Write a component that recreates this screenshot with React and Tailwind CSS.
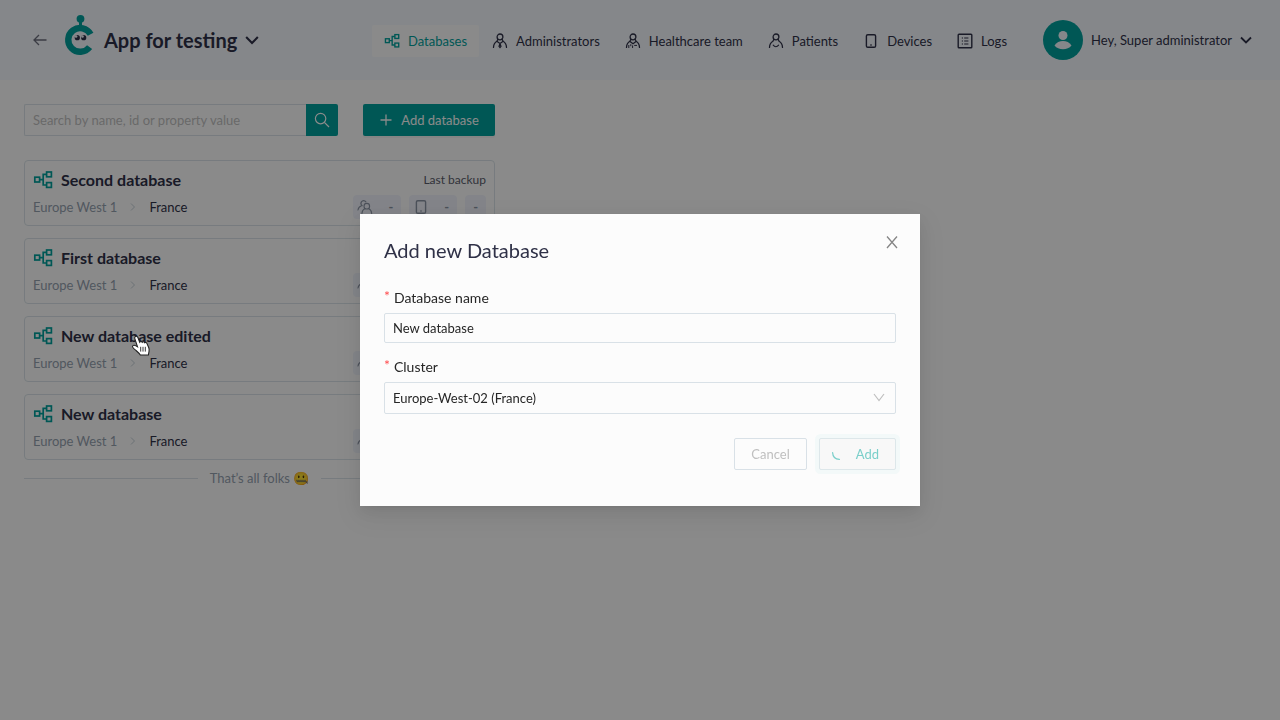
import React from "react";

function DatabaseIcon({ className }) {
  return (
    <svg viewBox="-1 -1 20 20" className={className} fill="none" stroke="currentColor" strokeWidth="1.7" aria-hidden="true">
      <rect x="0.8" y="6.2" width="4.8" height="4.8" />
      <rect x="12.6" y="1" width="4.8" height="4.8" />
      <rect x="12.6" y="11.6" width="4.8" height="4.8" />
      <path d="M5.6 8.6h3.6M12.6 3.4h-3.4v10.6h3.4" />
    </svg>
  );
}

function PersonIcon({ children }) {
  return (
    <svg viewBox="0 0 16 16" className="size-4" fill="none" stroke="currentColor" strokeWidth="1.3" strokeLinecap="round" aria-hidden="true">
      <circle cx="8" cy="3.9" r="2.9" />
      <path d="M5.9 6.3 4.9 8.3C3 9.4 1.6 11.6 1.5 14.4M10.1 6.3l1 2c1.9 1.1 3.3 3.3 3.4 6.1" />
      {children}
    </svg>
  );
}

function AdminIcon() {
  return (
    <PersonIcon>
      <path d="M5.2 8.6 8 10.6l2.8-2M8 10.4l-1 3L8 14.6l1-1.2-1-3" strokeWidth="1.2" />
    </PersonIcon>
  );
}

function CareIcon() {
  return (
    <PersonIcon>
      <path d="M5 8.6l3 2.2 3-2.2" />
      <path d="M3.8 12.4v2.2M5.8 11.6v1.2M7.6 12.8v1.8M9.6 12.4h2" strokeWidth="1" />
    </PersonIcon>
  );
}

function PatientIcon() {
  return (
    <PersonIcon>
      <path d="M5.2 12.2c.8 1 1.6 1.5 2.6 1.5s2-.5 2.8-1.5" strokeWidth="1.1" />
    </PersonIcon>
  );
}

function DeviceIcon({ className }) {
  return (
    <svg viewBox="0 0 16 16" className={className} fill="none" stroke="currentColor" strokeWidth="1.4" aria-hidden="true">
      <rect x="3.4" y="1.7" width="9.2" height="12.6" rx="1.4" />
      <path d="M7 12h2" strokeWidth="1" />
    </svg>
  );
}

function LogsIcon() {
  return (
    <svg viewBox="0 0 16 16" className="size-4" fill="none" stroke="currentColor" strokeWidth="1.4" aria-hidden="true">
      <rect x="1.2" y="1.2" width="13.6" height="13.6" rx="0.8" />
      <path d="M4.8 5h1.2M4.8 8h1.2M4.8 11h1.2M7.2 5h4.2M7.2 8h4.2M7.2 11h4.2" strokeWidth="1.1" />
    </svg>
  );
}

function UsersIcon() {
  return (
    <svg viewBox="0 0 16 16" className="size-4" fill="none" stroke="currentColor" strokeWidth="1.1" strokeLinecap="round" aria-hidden="true">
      <circle cx="9.8" cy="7.2" r="2.8" />
      <path d="M8 9.6c-1.8.9-3 2.8-3.1 5.2M11.6 9.6c1.8.9 3 2.8 3.1 5.2M5.2 6.6C4 5.800 3.600 4.200 4.400 2.900 5.500 1.200 7.800 1.200 8.900 2.900M4.400 6.800C2.600 7.500 1.300 9 1 11" />
    </svg>
  );
}

function ChevronDown({ className }) {
  return (
    <svg viewBox="0 0 12 12" className={className} fill="none" stroke="currentColor" strokeWidth="1.8" aria-hidden="true">
      <path d="M1 3.5l5 5 5-5" />
    </svg>
  );
}

function Logo() {
  return (
    <svg viewBox="0 0 32 44" className="h-11 w-8" aria-hidden="true">
      <circle cx="16.5" cy="4.8" r="3.9" fill="#009f9b" />
      <path d="M16.5 7v7" stroke="#009f9b" strokeWidth="3" />
      <path d="M26.6 20.2A11.9 11.9 0 1 0 25.6 33.1" fill="none" stroke="#009f9b" strokeWidth="6.4" />
      <circle cx="13.3" cy="23.7" r="2.6" fill="#2f3147" />
      <circle cx="19.7" cy="23.7" r="2.6" fill="#2f3147" />
      <circle cx="12.1" cy="22.5" r="1.3" fill="#f3f6fc" />
      <circle cx="18.5" cy="22.5" r="1.3" fill="#f3f6fc" />
    </svg>
  );
}

const navItems = [
  { label: "Databases", icon: <DatabaseIcon className="size-4" />, active: true },
  { label: "Administrators", icon: <AdminIcon /> },
  { label: "Healthcare team", icon: <CareIcon /> },
  { label: "Patients", icon: <PatientIcon /> },
  { label: "Devices", icon: <DeviceIcon className="size-4" /> },
  { label: "Logs", icon: <LogsIcon /> },
];

const databases = ["Second database", "First database", "New database edited", "New database"];

function Header() {
  return (
    <header className="flex h-20 items-center bg-[#f3f6fc] pr-7 pl-8 text-[#2f3147]">
      <button type="button" aria-label="Back" className="mr-4">
        <svg viewBox="0 0 16 16" className="size-4" fill="none" stroke="#6c6e7c" strokeWidth="1.3" aria-hidden="true">
          <path d="M14.5 8H2M7 3 2 8l5 5" />
        </svg>
      </button>
      <span className="mb-2">
        <Logo />
      </span>
      <button type="button" className="ml-2 flex items-center gap-2 text-xl font-bold whitespace-nowrap">
        App for testing
        <ChevronDown className="size-3.5" />
      </button>
      <nav className="ml-auto flex gap-px pt-0.5">
        {navItems.map((item) => (
          <a
            key={item.label}
            href="#"
            className={
              item.active
                ? "flex h-8 items-center gap-2 rounded-xs bg-[#fcfcfc] px-3 text-[13px] whitespace-nowrap text-[#009f9b]"
                : "flex h-8 items-center gap-2 rounded-xs px-3 text-[13px] whitespace-nowrap"
            }
          >
            {item.icon}
            {item.label}
          </a>
        ))}
      </nav>
      <button type="button" className="ml-6 flex items-center gap-2 text-[13px] whitespace-nowrap">
        <span className="flex size-10 items-center justify-center rounded-full bg-[#009f9b] text-[#f3f6fc]">
          <svg viewBox="0 0 20 20" className="size-5" fill="currentColor" aria-hidden="true">
            <circle cx="10" cy="5.5" r="4.5" />
            <path d="M1.5 15.5C3.5 12.4 6.5 11 10 11s6.500 1.400 8.500 4.500C16.500 18 13.500 19.300 10 19.300S3.500 18 1.500 15.500Z" />
          </svg>
        </span>
        Hey, Super administrator
        <ChevronDown className="size-3" />
      </button>
    </header>
  );
}

function Stat({ icon }) {
  return (
    <span
      className={
        icon
          ? "flex h-6 items-center gap-[15px] rounded-sm bg-[#eef1f9] pr-2 pl-1 font-bold text-[#8a93a3]"
          : "flex h-6 items-center rounded-sm bg-[#eef1f9] px-2 font-bold text-[#8a93a3]"
      }
    >
      {icon}
      <span>-</span>
    </span>
  );
}

function DatabaseCard({ name }) {
  return (
    <li className="flex h-[66px] flex-col justify-center gap-0.5 rounded-sm border border-[#d9e1e7] px-2">
      <div className="flex h-[26px] items-center justify-between">
        <h2 className="flex items-center gap-2 text-base font-bold text-[#2f3147]">
          <DatabaseIcon className="size-5 text-[#009f9b]" />
          {name}
        </h2>
        <span className="text-xs text-[#5a5c6b]">Last backup</span>
      </div>
      <div className="flex h-6 items-center justify-between text-[13px]">
        <div className="flex items-center text-[#94a0ae]">
          Europe West 1
          <svg viewBox="0 0 8 8" className="mx-3 size-2" fill="none" stroke="#c3cdd5" aria-hidden="true">
            <path d="M2 0.5 5.5 4 2 7.5" />
          </svg>
          <span className="text-[#2f3147]">France</span>
        </div>
        <div className="flex gap-2">
          <Stat icon={<UsersIcon />} />
          <Stat icon={<DeviceIcon className="size-4" />} />
          <Stat />
        </div>
      </div>
    </li>
  );
}

function AddDatabaseDialog() {
  return (
    <div className="fixed inset-0 flex items-center justify-center bg-black/45">
      <form
        role="dialog"
        aria-labelledby="dialog-title"
        className="relative w-full max-w-[560px] bg-[#fcfcfc] px-6 pt-6 pb-9 text-[13px] text-[#262626] shadow-[0_3px_6px_-4px_rgba(0,0,0,0.12),0_6px_16px_0_rgba(0,0,0,0.08),0_9px_28px_8px_rgba(0,0,0,0.05)]"
      >
        <button type="button" aria-label="Close" className="absolute top-5 right-5 text-[#858585]">
          <svg viewBox="0 0 16 16" className="size-4" fill="none" stroke="currentColor" strokeWidth="1.3" aria-hidden="true">
            <path d="M3 2.5l10 11.5M13 2.5 3 14" />
          </svg>
        </button>
        <h1 id="dialog-title" className="mb-6 text-xl leading-6 text-[#2f3147]">Add new Database</h1>
        <label htmlFor="db-name" className="mb-[3px] flex h-6 items-center gap-1 text-sm">
          <span className="self-start text-[#ff4d4f]">*</span>
          Database name
        </label>
        <input
          id="db-name"
          defaultValue="New database"
          className="mb-3 block h-[30px] w-full rounded-xs border border-[#d9e1e7] px-2 outline-none"
        />
        <label htmlFor="db-cluster" className="mb-[3px] flex h-6 items-center gap-1 text-sm">
          <span className="self-start text-[#ff4d4f]">*</span>
          Cluster
        </label>
        <div className="relative mb-6">
          <select
            id="db-cluster"
            className="block h-8 w-full appearance-none rounded-xs border border-[#d9e1e7] px-2 outline-none"
          >
            <option>Europe-West-02 (France)</option>
          </select>
          <svg viewBox="0 0 12 12" className="pointer-events-none absolute top-2.5 right-[11px] size-3" fill="none" stroke="#bfbfbf" strokeWidth="1.2" aria-hidden="true">
            <path d="M1 2l5 6.5L11 2" />
          </svg>
        </div>
        <div className="flex justify-end gap-3">
          <button type="button" disabled className="h-8 rounded-xs border border-[#d9e1e7] px-4 text-[#bfbfbf]">
            Cancel
          </button>
          <button
            type="submit"
            disabled
            className="flex h-8 items-center gap-4 rounded-xs border border-[#dde7ea] bg-[#f8f8f8] pr-4 pl-3 text-[#7acfca] shadow-[0_0_0_4px_#f3f9f9]"
          >
            <svg viewBox="0 0 8 8" className="mt-1 size-2" fill="none" stroke="currentColor" strokeWidth="1.2" strokeLinecap="round" aria-hidden="true">
              <path d="M0.6 0.6C0.8 4.4 3.4 7.2 7.4 7.4" />
            </svg>
            Add
          </button>
        </div>
      </form>
    </div>
  );
}

function HandCursor() {
  return (
    <svg viewBox="0 0 20 22" className="pointer-events-none fixed top-[335px] left-[131px] h-[22px] w-5" aria-hidden="true">
      <path
        d="M4.500 1.500c1-.6 2 0 2.400 1l1.800 4.700c.6-1 2-.9 2.500.1.700-.8 2-.6 2.400.4.800-.6 2-.2 2.300.7l1.900 4.400c.5 1.300.4 2.500.2 3.700l-.6 3.500H9.300c-1-1.800-3-3.400-4.600-4.800C3.200 14 1.300 12.500 1.500 11.300c.3-1.400 2.200-1.300 3.500-.4l1.500.9L3.800 3.600c-.3-.8 0-1.700.7-2.100Z"
        fill="#fff"
        stroke="#222"
        strokeWidth="1.1"
      />
      <path d="M9.700 11.800v4.800M12 11.800v4.800M14.300 11.800v4.800" stroke="#222" strokeWidth="0.9" />
    </svg>
  );
}

export default function App() {
  return (
    <div className="min-h-screen bg-[#fcfcfc] font-['Lato',sans-serif] leading-5">
      <Header />
      <main className="w-full max-w-[519px] p-6">
        <div className="mb-6 flex gap-[25px]">
          <div className="flex flex-1">
            <input
              type="text"
              aria-label="Search"
              placeholder="Search by name, id or property value"
              className="h-8 min-w-0 flex-1 rounded-l-xs border border-r-0 border-[#d9e1e7] px-2 text-[13px] outline-none placeholder:text-[#bfbfbf]"
            />
            <button type="button" aria-label="Search" className="flex size-8 items-center justify-center rounded-r-xs bg-[#009f9b] text-[#fcfcfc]">
              <svg viewBox="0 0 16 16" className="size-4" fill="none" stroke="currentColor" strokeWidth="1.2" aria-hidden="true">
                <circle cx="6.6" cy="6.6" r="5.2" />
                <path d="M10.4 10.4 15 15" />
              </svg>
            </button>
          </div>
          <button type="button" className="flex h-8 w-[132px] items-center justify-center gap-2 rounded-xs bg-[#009f9b] text-[13px] text-[#fcfcfc] shadow-[0_2px_0_rgba(0,0,0,0.04)]">
            <svg viewBox="0 0 14 14" className="size-3.5" fill="none" stroke="currentColor" strokeWidth="1.3" aria-hidden="true">
              <path d="M7 1.5v11M1.5 7h11" />
            </svg>
            Add database
          </button>
        </div>
        <ul className="flex flex-col gap-3">
          {databases.map((name) => (
            <DatabaseCard key={name} name={name} />
          ))}
        </ul>
        <p className="mt-2 flex items-center gap-3 text-[13px] text-[#94a0ae]">
          <span className="h-px flex-1 bg-[#d9e1e7]" />
          That’s all folks 🤐
          <span className="h-px flex-1 bg-[#d9e1e7]" />
        </p>
      </main>
      <AddDatabaseDialog />
      <HandCursor />
    </div>
  );
}
